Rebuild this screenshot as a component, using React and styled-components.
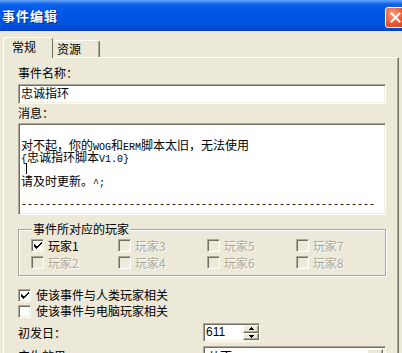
import React from "react";
import styled, { createGlobalStyle, css } from "styled-components";

const Global = createGlobalStyle`
  html, body { margin: 0; padding: 0; background: #ECE9D8; }
  body {
    font-family: "Noto Sans CJK SC", "Liberation Sans", sans-serif;
    font-size: 12px;
    color: #000;
  }
  * { box-sizing: border-box; }
`;

const Window = styled.div`
  width: 402px;
  height: 353px;
  overflow: hidden;
  background: #ECE9D8;
  display: flex;
  flex-direction: column;
`;

const TitleBar = styled.div`
  height: 31px;
  flex: none;
  display: flex;
  align-items: center;
  justify-content: space-between;
  padding-left: 2px;
  background: linear-gradient(
    to bottom,
    #6AA6F8 0px,
    #3B86F4 2px,
    #0E63EB 4px,
    #0058E7 10px,
    #0055E3 22px,
    #004BD9 28px,
    #0040C8 31px
  );
`;

const Title = styled.div`
  color: #fff;
  font-weight: 700;
  font-size: 13px;
  letter-spacing: 1px;
  line-height: 15px;
  text-shadow: 1px 1px 0 #0A2A8A;
`;

const CloseButton = styled.div`
  width: 21px;
  height: 21px;
  flex: none;
  margin-right: -4px;
  margin-top: 4px;
  border: 1px solid #fff;
  border-radius: 3px;
  background: radial-gradient(circle at 35% 30%, #F59A7E 0%, #E25A36 55%, #C9421F 100%);
  display: flex;
  align-items: center;
  justify-content: center;
`;

const Body = styled.div`
  flex: 1;
  padding: 6px 3px 0 3px;
  display: flex;
  flex-direction: column;
  min-height: 0;
`;

const TabStrip = styled.div`
  display: flex;
  align-items: flex-end;
  height: 20px;
  flex: none;
  position: relative;
  z-index: 1;
`;

const Tab = styled.div`
  width: ${(p) => p.$w}px;
  border: 1px solid;
  border-bottom: none;
  border-color: #fff #716F64 transparent #fff;
  border-radius: 3px 3px 0 0;
  background: #ECE9D8;
  line-height: 12px;
  white-space: nowrap;
  ${(p) =>
    p.$active
      ? css`
          height: 21px;
          margin-bottom: -1px;
          padding: 3px 0 0 8px;
        `
      : css`
          height: 17px;
          padding: 2px 0 0 4px;
          border-left: none;
          box-shadow: inset -1px 0 0 #ACA899;
        `}
`;

const Panel = styled.div`
  flex: 1;
  min-height: 0;
  border-top: 1px solid #fff;
  border-left: 1px solid #fff;
  border-right: 1px solid #716F64;
  box-shadow: inset -1px 0 0 #ACA899;
  padding: 8px 12px 0 14px;
  display: flex;
  flex-direction: column;
`;

const FieldLabel = styled.div`
  height: 14px;
  line-height: 14px;
  margin-top: ${(p) => p.$mt || 0}px;
`;

const sunken = css`
  background: #fff;
  border: 1px solid;
  border-color: #ACA899 #fff #fff #ACA899;
  box-shadow: inset 1px 1px 0 #716F64, inset -1px -1px 0 #F1EFE2;
`;

const raised = css`
  background: #ECE9D8;
  border: 1px solid;
  border-color: #fff #716F64 #716F64 #fff;
  box-shadow: inset -1px -1px 0 #ACA899;
`;

const TextInput = styled.div`
  ${sunken};
  height: 20px;
  margin-top: 4px;
  padding: 1px 2px;
  line-height: 14px;
  flex: none;
`;

const MessageBox = styled.div`
  ${sunken};
  height: 92px;
  margin-top: 3px;
  padding: 3px 2px;
  flex: none;
  overflow: hidden;
`;

const Line = styled.div`
  height: 12px;
  line-height: 12px;
  white-space: pre;
`;

const Half = styled.span`
  font-family: "Liberation Mono", monospace;
  font-size: 10px;
`;

const Dashes = styled(Line)`
  font-family: "Liberation Mono", monospace;
  font-size: 10px;
`;

const Caret = styled.span`
  display: inline-block;
  width: 1px;
  height: 11px;
  background: #000;
  margin-left: 5px;
  vertical-align: top;
`;

const GroupBox = styled.fieldset`
  margin: 7px 0 0 0;
  padding: 0 0 4px 12px;
  border: 1px solid #ACA899;
  box-shadow: 1px 1px 0 #fff, inset 1px 1px 0 #fff;
  min-width: 0;
  flex: none;
`;

const GroupTitle = styled.legend`
  margin-left: 1px;
  padding: 0 1px;
  height: 14px;
  line-height: 14px;
  background: #ECE9D8;
`;

const PlayerGrid = styled.div`
  display: grid;
  grid-template-columns: 87px 89px 89px auto;
  grid-auto-rows: 17px;
  padding-top: 1px;
`;

const CheckRow = styled.label`
  display: flex;
  align-items: center;
  gap: ${(p) => p.$gap || 4}px;
  height: ${(p) => p.$h || 17}px;
  white-space: nowrap;
  line-height: 14px;
  color: ${(p) => (p.$disabled ? "#ACA899" : "#000")};
  text-shadow: ${(p) => (p.$disabled ? "1px 1px 0 #fff" : "none")};
`;

const Box = styled.span`
  width: 13px;
  height: 13px;
  flex: none;
  border: 1px solid;
  border-color: #ACA899 #fff #fff #ACA899;
  box-shadow: inset 1px 1px 0 #716F64, inset -1px -1px 0 #F1EFE2;
  background: ${(p) => (p.$disabled ? "#ECE9D8" : "#fff")};
  display: flex;
  align-items: center;
  justify-content: center;
`;

const Options = styled.div`
  margin-top: 11px;
  display: flex;
  flex-direction: column;
  flex: none;
`;

const FormRow = styled.div`
  display: flex;
  align-items: center;
  margin-top: ${(p) => p.$mt || 0}px;
  flex: none;
`;

const RowLabel = styled.div`
  width: 185px;
  flex: none;
  line-height: 14px;
  align-self: ${(p) => (p.$top ? "flex-start" : "center")};
  padding-top: ${(p) => (p.$top ? 3 : 0)}px;
`;

const Spinner = styled.div`
  ${sunken};
  width: 57px;
  height: 19px;
  display: flex;
  padding: 2px 0 2px 2px;
`;

const SpinValue = styled.div`
  flex: 1;
  line-height: 14px;
  font-family: "Liberation Sans", sans-serif;
  margin-top: -1px;
`;

const SpinButtons = styled.div`
  width: 16px;
  display: flex;
  flex-direction: column;
  margin: -1px 0;
`;

const SpinButton = styled.div`
  ${raised};
  flex: 1;
  display: flex;
  align-items: center;
  justify-content: center;
`;

const Select = styled.div`
  ${sunken};
  flex: 1;
  height: 21px;
  display: flex;
  padding: 2px 2px 2px 3px;
`;

const SelectText = styled.div`
  flex: 1;
  line-height: 14px;
  padding-left: 1px;
`;

const DropButton = styled.div`
  ${raised};
  width: 16px;
  display: flex;
  align-items: center;
  justify-content: center;
`;

const Check = () => (
  <svg width="9" height="9" viewBox="0 0 9 9" shapeRendering="crispEdges">
    <path d="M1 3h1v1H1zM1 4h2v1H1zM1 5h3v1H1zM2 6h2v1H2zM3 7h1v1H3zM4 5h1v2H4zM5 4h1v2H5zM6 3h1v2H6zM7 2h1v2H7zM8 1h1v2H8z" fill="#000" />
  </svg>
);

const Arrow = ({ up, size = 5 }) => {
  const h = Math.ceil(size / 2);
  return (
    <svg width={size} height={h} viewBox={`0 0 ${size} ${h}`} shapeRendering="crispEdges">
      <path
        d={up ? `M${size / 2} 0 L${size} ${h} L0 ${h} Z` : `M0 0 L${size} 0 L${size / 2} ${h} Z`}
        fill="#000"
      />
    </svg>
  );
};

const CheckItem = ({ label, checked, disabled, gap, h }) => (
  <CheckRow $disabled={disabled} $gap={gap} $h={h}>
    <Box $disabled={disabled}>{checked && <Check />}</Box>
    <span>{label}</span>
  </CheckRow>
);

const players = [
  { label: "玩家1", checked: true, disabled: false },
  { label: "玩家3", disabled: true },
  { label: "玩家5", disabled: true },
  { label: "玩家7", disabled: true },
  { label: "玩家2", disabled: true },
  { label: "玩家4", disabled: true },
  { label: "玩家6", disabled: true },
  { label: "玩家8", disabled: true },
];

export default function App() {
  return (
    <>
      <Global />
      <Window>
        <TitleBar>
          <Title>事件编辑</Title>
          <CloseButton>
            <svg width="11" height="11" viewBox="0 0 11 11">
              <path d="M1.5 1.5 L9.5 9.5 M9.5 1.5 L1.5 9.5" stroke="#fff" strokeWidth="2" strokeLinecap="square" />
            </svg>
          </CloseButton>
        </TitleBar>
        <Body>
          <TabStrip>
            <Tab $active $w={50}>常规</Tab>
            <Tab $w={47}>资源</Tab>
          </TabStrip>
          <Panel>
            <FieldLabel>事件名称：</FieldLabel>
            <TextInput>忠诚指环</TextInput>
            <FieldLabel $mt={2}>消息：</FieldLabel>
            <MessageBox>
              <Line> </Line>
              <Line>
                对不起，你的<Half>WOG</Half>和<Half>ERM</Half>脚本太旧，无法使用
              </Line>
              <Line>
                <Half>{"{"}</Half>忠诚指环脚本<Half>V1.0}</Half>
              </Line>
              <Line>
                <Caret />
              </Line>
              <Line>
                请及时更新。<Half>^;</Half>
              </Line>
              <Line> </Line>
              <Dashes>{"-".repeat(59)}</Dashes>
            </MessageBox>
            <GroupBox>
              <GroupTitle>事件所对应的玩家</GroupTitle>
              <PlayerGrid>
                {players.map((p) => (
                  <CheckItem key={p.label} {...p} />
                ))}
              </PlayerGrid>
            </GroupBox>
            <Options>
              <CheckItem label="使该事件与人类玩家相关" checked gap={5} h={16} />
              <CheckItem label="使该事件与电脑玩家相关" gap={5} h={16} />
            </Options>
            <FormRow $mt={4}>
              <RowLabel>初发日：</RowLabel>
              <Spinner>
                <SpinValue>611</SpinValue>
                <SpinButtons>
                  <SpinButton>
                    <Arrow up />
                  </SpinButton>
                  <SpinButton>
                    <Arrow />
                  </SpinButton>
                </SpinButtons>
              </Spinner>
            </FormRow>
            <FormRow $mt={4}>
              <RowLabel $top>产生效果：</RowLabel>
              <Select>
                <SelectText>从不</SelectText>
                <DropButton>
                  <Arrow size={7} />
                </DropButton>
              </Select>
            </FormRow>
          </Panel>
        </Body>
      </Window>
    </>
  );
}
